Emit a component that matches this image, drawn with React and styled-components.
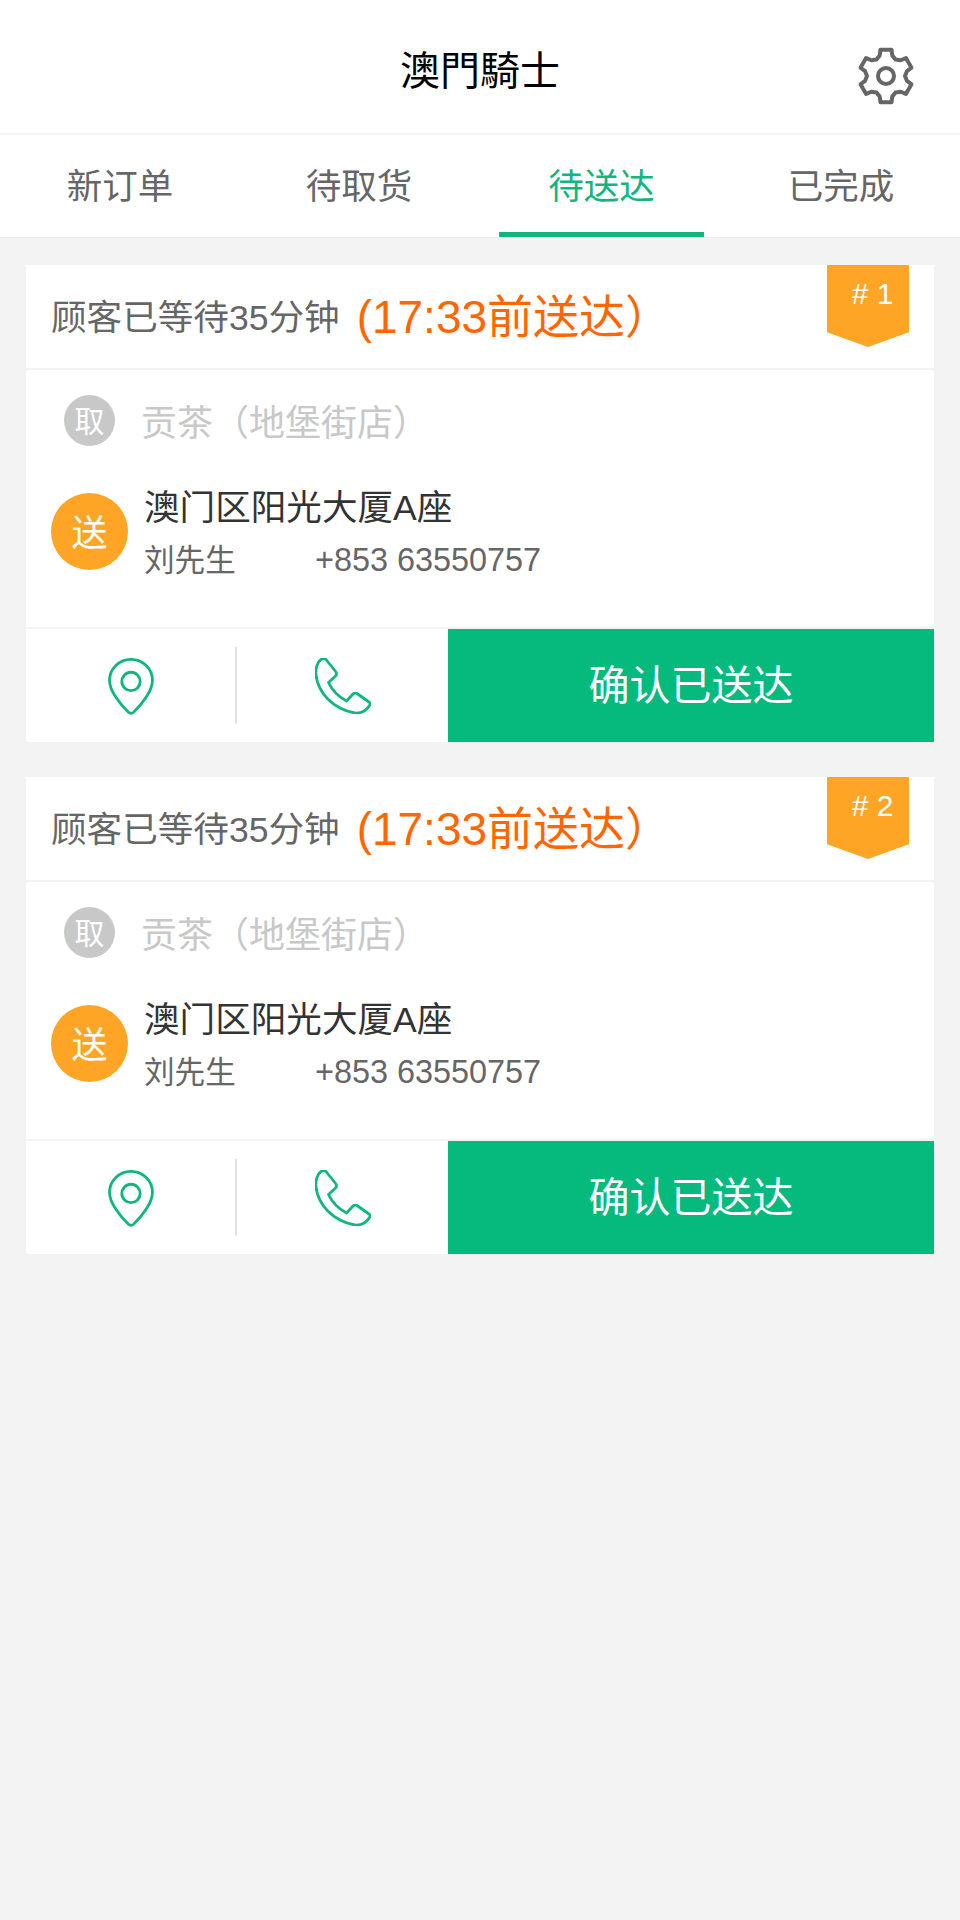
import React from 'react'
import styled, { createGlobalStyle } from 'styled-components'

const GlobalStyle = createGlobalStyle`
    html, body {
        margin: 0;
        padding: 0;
        background: #f3f3f3;
    }
    body {
        font-family: "Liberation Sans", "Noto Sans CJK SC", sans-serif;
    }
    * {
        box-sizing: border-box;
    }
`

const tabs = ['新订单', '待取货', '待送达', '已完成']
const orders = [1, 2]

function gearPath() {
    const cx = 30
    const cy = 30
    const pt = (r, deg) => {
        const a = (deg * Math.PI) / 180
        return `${(cx + r * Math.sin(a)).toFixed(2)} ${(cy - r * Math.cos(a)).toFixed(2)}`
    }
    let d = ''
    for (let i = 0; i < 6; i++) {
        const a = i * 60
        d += `${i === 0 ? 'M' : 'L'}${pt(19, a - 30)} L${pt(21.5, a - 17)} L${pt(26.8, a - 12)} L${pt(26.8, a + 12)} L${pt(21.5, a + 17)} `
    }
    return d + 'Z'
}

function GearIcon() {
    return (
        <Gear viewBox="0 0 60 60" fill="none" stroke="#666" strokeWidth="4" strokeLinejoin="round">
            <path d={gearPath()} />
            <circle cx="30" cy="30" r="8" />
        </Gear>
    )
}

function PinIcon() {
    return (
        <PinSvg width="46" height="57" viewBox="0 0 45 56" fill="none" stroke="#10b67e" strokeWidth="2.8">
            <path d="M22.5 1.4C34 1.4 43.6 10.5 43.6 22C43.6 32 33 46 25 53.3Q22.5 55.3 20 53.3C12 46 1.4 32 1.4 22C1.4 10.5 11 1.4 22.5 1.4Z" />
            <circle cx="22.5" cy="23" r="9" />
        </PinSvg>
    )
}

function PhoneIcon() {
    return (
        <svg width="56" height="56" viewBox="225 17 56 56" fill="none" stroke="#10b67e" strokeWidth="2.8" strokeLinejoin="round">
            <path d="M231 18.5C233 17 235 17.5 236 18.5L246 31Q247 33.5 245.5 35L238.5 41.5C242 49 249 56 256.5 60L263 53Q264.5 51.5 267 52.5L279 61Q281 62.5 279.5 64.5C276 70 271 72.5 265 72C243 68 228 52 226 34C225.5 27 227 22 231 18.5Z" />
        </svg>
    )
}

function OrderCard({ index }) {
    return (
        <Card>
            <CardHeader>
                <WaitText>顾客已等待35分钟</WaitText>
                <DueText>(17:33前送达）</DueText>
                <Ribbon># {index}</Ribbon>
            </CardHeader>
            <Route>
                <PickRow>
                    <PickDot>取</PickDot>
                    <ShopName>贡茶（地堡街店）</ShopName>
                </PickRow>
                <DropRow>
                    <DropDot>送</DropDot>
                    <DropText>
                        <Address>澳门区阳光大厦A座</Address>
                        <Contact>
                            <ContactName>刘先生</ContactName>
                            <span>+853 63550757</span>
                        </Contact>
                    </DropText>
                </DropRow>
            </Route>
            <Actions>
                <IconCell divided><PinIcon /></IconCell>
                <IconCell><PhoneIcon /></IconCell>
                <ConfirmButton>确认已送达</ConfirmButton>
            </Actions>
        </Card>
    )
}

export default function App() {
    return (
        <Page>
            <GlobalStyle />
            <TopBar>
                <Title>澳門騎士</Title>
                <GearIcon />
            </TopBar>
            <TabBar>
                {tabs.map((t, i) => (
                    <Tab key={t} active={i === 2}>{t}</Tab>
                ))}
            </TabBar>
            <List>
                {orders.map(n => <OrderCard key={n} index={n} />)}
            </List>
        </Page>
    )
}

const Page = styled.div`
    min-height: 1920px;
    background: #f3f3f3;
`

const TopBar = styled.div`
    position: relative;
    height: 133px;
    background: #fff;
    display: flex;
    align-items: center;
    justify-content: center;
`

const Title = styled.div`
    font-size: 40px;
    color: #000;
    margin-top: 2px;
`

const Gear = styled.svg`
    position: absolute;
    top: 46px;
    right: 44px;
    width: 60px;
    height: 60px;
`

const TabBar = styled.div`
    height: 103px;
    margin-top: 2px;
    background: #fff;
    display: grid;
    grid-template-columns: 240px 238px 244px 238px;
    border-bottom: 1px solid #ececec;
`

const Tab = styled.div`
    display: flex;
    align-items: center;
    justify-content: center;
    font-size: 35.5px;
    color: ${props => props.active ? '#10b67e' : '#666'};
    margin: 0 ${props => props.active ? '18px' : '0'} 0 ${props => props.active ? '21px' : '0'};
    border-bottom: 5px solid ${props => props.active ? '#10b67e' : 'transparent'};
`

const List = styled.div`
    padding: 27px 26px 0;
    display: flex;
    flex-direction: column;
    gap: 35px;
`

const Card = styled.div`
    display: flex;
    flex-direction: column;
    gap: 2px;
`

const CardHeader = styled.div`
    position: relative;
    height: 103px;
    padding: 0 25px 5px;
    background: #fff;
    display: flex;
    align-items: center;
    gap: 17px;
`

const WaitText = styled.span`
    font-size: 35.6px;
    color: #666;
`

const DueText = styled.span`
    font-size: 46px;
    margin-bottom: 3px;
    color: #ff6600;
`

const Ribbon = styled.div`
    position: absolute;
    top: 0;
    right: 25px;
    width: 82px;
    height: 82px;
    padding: 12px 0 0 9px;
    background: #ffa526;
    color: #fff;
    font-size: 30px;
    line-height: 34px;
    text-align: center;
    clip-path: polygon(0 0, 100% 0, 100% 82%, 50% 100%, 0 82%);
`

const Route = styled.div`
    height: 257px;
    padding: 25px 25px 0;
    background: #fff;
`

const PickRow = styled.div`
    display: flex;
    align-items: center;
    height: 51px;
    padding-left: 13px;
`

const PickDot = styled.div`
    width: 51px;
    height: 51px;
    padding-bottom: 4px;
    border-radius: 50%;
    background: #c8c8c8;
    color: #fff;
    font-size: 30px;
    display: flex;
    align-items: center;
    justify-content: center;
`

const ShopName = styled.div`
    font-size: 36px;
    color: #c8c8c8;
    margin: -2px 0 0 26px;
`

const DropRow = styled.div`
    display: flex;
    align-items: flex-start;
    gap: 16px;
    margin-top: 37px;
`

const DropDot = styled.div`
    width: 77px;
    height: 77px;
    flex: none;
    margin-top: 10px;
    padding-bottom: 4px;
    border-radius: 50%;
    background: #ffa526;
    color: #fff;
    font-size: 36px;
    display: flex;
    align-items: center;
    justify-content: center;
`

const DropText = styled.div`
    display: flex;
    flex-direction: column;
`

const Address = styled.div`
    font-size: 35.6px;
    line-height: 50px;
    color: #333;
`

const Contact = styled.div`
    display: flex;
    font-size: 32.4px;
    line-height: 50px;
    color: #666;
    margin-top: 2px;
`

const ContactName = styled.span`
    width: 171px;
    font-size: 30.6px;
`

const Actions = styled.div`
    display: flex;
    height: 113px;
    background: #fff;
`

const PinSvg = styled.svg`
    margin: 1px 2px 0 0;
`

const IconCell = styled.div`
    width: 211px;
    display: flex;
    align-items: center;
    justify-content: center;
    position: relative;
    ${props => props.divided ? `
        &::after {
            content: "";
            position: absolute;
            right: 0;
            top: 18px;
            bottom: 18px;
            width: 2px;
            background: #e2e2e2;
        }
    ` : ''}
`

const ConfirmButton = styled.div`
    flex: 1;
    padding-bottom: 7px;
    background: #06ba7e;
    color: #fff;
    font-size: 41px;
    display: flex;
    align-items: center;
    justify-content: center;
`
